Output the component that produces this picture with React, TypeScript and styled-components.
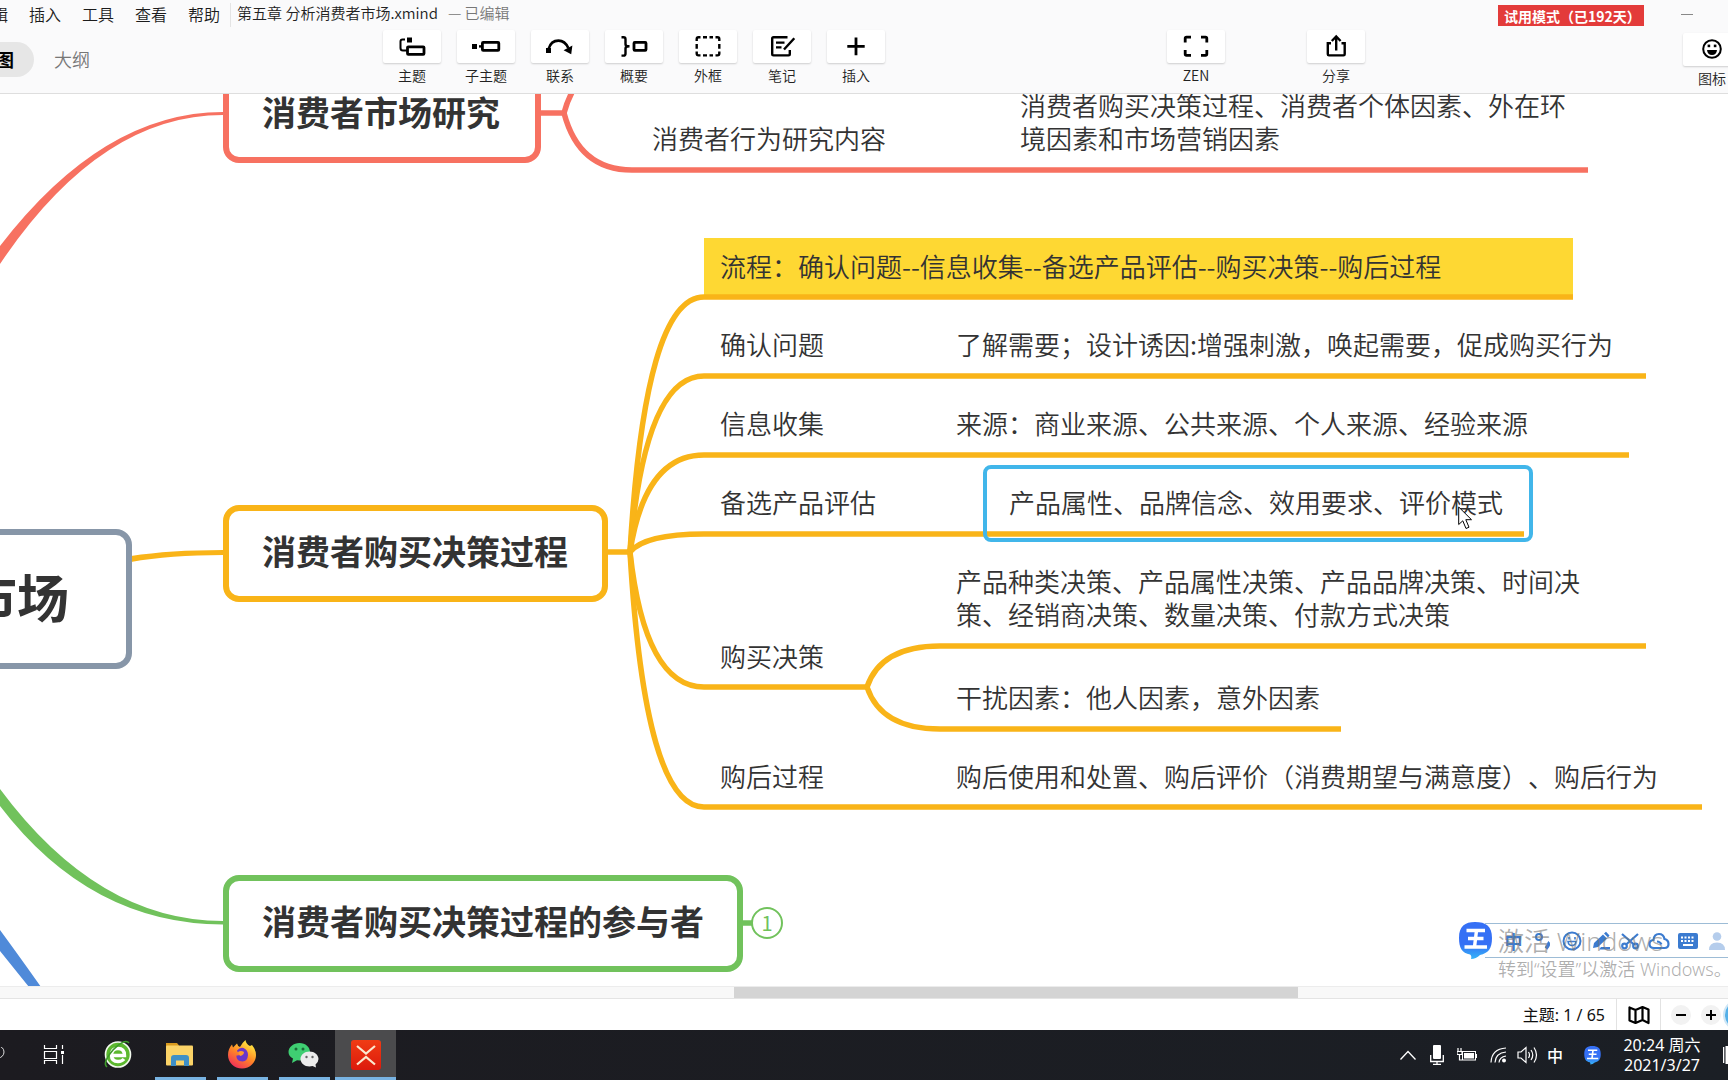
import React from "react";
import styled, { createGlobalStyle, css } from "styled-components";

const cjk = `"Noto Sans CJK SC", "Noto Sans", sans-serif`;
const latin = `"Noto Sans", "Noto Sans CJK SC", sans-serif`;

const color = {
  red: "#f77161",
  yellow: "#f9b418",
  green: "#71c25c",
  blue: "#4f8ad9",
  slate: "#8796a8",
  select: "#41b6ea",
  ime: "#3b7bd0",
  text: "#333333",
};

const GlobalStyle = createGlobalStyle`
  * { box-sizing: border-box; }
  body { margin: 0; background: #fff; font-family: ${cjk}; color: ${color.text}; overflow: hidden; }
  button { font: inherit; color: inherit; border: 0; padding: 0; background: none; cursor: pointer; }
  svg { display: block; flex: none; }
`;

const Page = styled.div`
  display: flex;
  flex-direction: column;
  height: 100vh;
  overflow: hidden;
`;

/* ---------- header ---------- */

const Header = styled.header`
  flex: none;
  background: #fafafb;
  border-bottom: 1px solid #dedede;
`;

const MenuRow = styled.div`
  display: flex;
  align-items: center;
  height: 30px;
  padding-right: 35px;
`;

const Menu = styled.nav`
  display: flex;
  gap: 21px;
  margin-left: -24px;
  padding: 0 10px 2px 0;
  border-right: 1px solid #e4e4e4;
`;

const MenuItem = styled.button`
  font-size: 16px;
  line-height: 22px;
  font-weight: 350;
  color: #1c1c1c;
  white-space: nowrap;
`;

const FileTitle = styled.div`
  display: flex;
  gap: 10px;
  margin-left: 6px;
  padding-bottom: 4px;
  font-size: 15px;
  line-height: 22px;
  font-weight: 350;
  color: #222;
  white-space: nowrap;
`;

const Edited = styled.span`
  color: #777;
`;

const TrialBadge = styled.button`
  && {
    margin-left: auto;
    width: 146px;
    height: 21px;
    padding-left: 6px;
    background: #e33b3a;
    color: #fff;
    font-size: 14px;
    line-height: 22px;
    font-weight: 700;
    text-align: left;
    white-space: nowrap;
  }
`;

const Minimize = styled.button`
  && {
    width: 12px;
    height: 12px;
    margin-left: 37px;
    display: flex;
    align-items: center;
  }
`;

const ToolRow = styled.div`
  display: flex;
  align-items: flex-start;
  height: 63px;
`;

const Tabs = styled.div`
  flex: 0 0 383px;
  display: flex;
  padding-top: 12px;
`;

const Tab = styled.button<{ $active?: boolean }>`
  && {
    height: 35px;
    padding: 0 20px;
    border-radius: 18px;
    font-size: 18px;
    line-height: 35px;
    font-weight: 350;
    color: #777;
    white-space: nowrap;
    ${(p) =>
      p.$active &&
      css`
        margin-left: -78px;
        background: #e6e6e6;
        color: #000;
        font-weight: 700;
      `}
  }
`;

const Tools = styled.div`
  display: flex;
  gap: 16px;
`;

const SideTools = styled.div`
  display: flex;
  gap: 82px;
  margin-left: auto;
`;

const PanelTools = styled.div`
  margin: 3px -13px 0 318px;
`;

const ToolButton = styled.button`
  display: flex;
  flex-direction: column;
  align-items: center;
  width: 58px;
  gap: 3px;
`;

const ToolFace = styled.span`
  width: 58px;
  height: 33px;
  background: #fff;
  border-radius: 2px;
  box-shadow: 0 1px 2px rgba(0, 0, 0, 0.18);
`;

const ToolLabel = styled.span`
  font-size: 14px;
  line-height: 18px;
  font-weight: 350;
  color: #222;
  white-space: nowrap;
`;

/* ---------- mind map canvas ---------- */

const Canvas = styled.main`
  flex: 1 1 0;
  min-height: 0;
  position: relative;
  overflow: hidden;
  background: #fff;
`;

/* The board is scrolled up under the header by the header's own height. */
const Board = styled.div`
  position: absolute;
  left: 0;
  top: -94px;
`;

const Wires = styled.svg`
  position: absolute;
  left: 0;
  top: 0;
  overflow: visible;
  fill: none;
  stroke-width: 5.5px;
`;

const MainTopic = styled.div<{ $x: number; $y: number; $w: number; $color: string }>`
  position: absolute;
  left: ${(p) => p.$x}px;
  top: ${(p) => p.$y}px;
  width: ${(p) => p.$w}px;
  height: 97px;
  padding-left: 33px;
  border: 6px solid ${(p) => p.$color};
  border-radius: 16px;
  background: #fff;
  font-size: 34px;
  line-height: 80px;
  font-weight: 700;
  white-space: nowrap;
`;

const RootTopic = styled.div`
  position: absolute;
  right: -132px;
  top: 529px;
  height: 140px;
  padding: 0 57px;
  border: 6px solid ${color.slate};
  border-radius: 16px;
  background: #fff;
  font-size: 52px;
  line-height: 122px;
  font-weight: 700;
  white-space: nowrap;
`;

const SubTopic = styled.div<{ $x: number; $y: number }>`
  position: absolute;
  left: ${(p) => p.$x}px;
  top: ${(p) => p.$y}px;
  font-size: 26px;
  line-height: 33px;
  font-weight: 350;
  text-spacing-trim: space-all;
  white-space: nowrap;
`;

const Highlight = styled.div`
  position: absolute;
  left: 704px;
  top: 238px;
  width: 869px;
  height: 59px;
  background: #fed833;
`;

const Selection = styled.div`
  position: absolute;
  left: 983px;
  top: 465px;
  width: 550px;
  height: 77px;
  border: 4px solid ${color.select};
  border-radius: 8px;
`;

const FoldButton = styled.button`
  && {
    position: absolute;
    left: 751px;
    top: 907px;
    width: 32px;
    height: 32px;
    border: 2px solid ${color.green};
    border-radius: 50%;
    background: #fff;
    color: ${color.green};
    font-size: 20px;
    line-height: 26px;
  }
`;

const Pointer = styled.svg`
  position: absolute;
  left: 1458px;
  top: 506px;
`;

/* ---------- input method bar and watermark ---------- */

const ImeBar = styled.div`
  position: absolute;
  right: 0;
  bottom: 28px;
  width: 253px;
  height: 35px;
  padding-left: 14px;
  display: flex;
  align-items: center;
  border-top: 1px solid #9dbcd6;
  border-bottom: 1px solid #9dbcd6;
  margin-right: -10px;
  color: ${color.ime};
`;

const ImeLogo = styled.svg`
  position: absolute;
  left: -26px;
  top: -2px;
`;

const ImeButton = styled.button`
  && {
    width: 29px;
    flex: none;
    display: flex;
    justify-content: center;
    font-size: 18px;
    line-height: 24px;
    font-weight: 700;
  }
`;

const Watermark = styled.div`
  position: absolute;
  left: calc(100% - 230px);
  bottom: 5px;
  color: rgba(120, 120, 120, 0.6);
  font-family: ${latin};
  font-weight: 350;
  white-space: nowrap;
  pointer-events: none;
`;

const WatermarkTitle = styled.div`
  font-size: 26px;
  line-height: 32px;
`;

const WatermarkHint = styled.div`
  font-size: 18px;
  line-height: 24px;
`;

/* ---------- scroll bar and status bar ---------- */

const ScrollTrack = styled.div`
  flex: none;
  height: 13px;
  background: #f8f8f8;
  border-top: 1px solid #ececec;
  border-bottom: 1px solid #e4e4e4;
`;

const ScrollThumb = styled.div`
  width: 32.6%;
  height: 100%;
  margin-left: 42.5%;
  background: #d4d4d4;
`;

const StatusBar = styled.footer`
  flex: none;
  height: 31px;
  display: flex;
  justify-content: flex-end;
  align-items: center;
  background: #fff;
`;

const TopicCount = styled.div`
  padding-right: 11px;
  font-family: ${latin};
  font-size: 16px;
  line-height: 30px;
  color: #111;
  white-space: nowrap;
`;

const OutlineButton = styled.button`
  && {
    width: 45px;
    height: 31px;
    display: flex;
    align-items: center;
    justify-content: center;
    border-left: 1px solid #e2e2e2;
    border-right: 1px solid #e2e2e2;
  }
`;

const ZoomButton = styled.button`
  && {
    width: 20px;
    height: 20px;
    margin-left: 10px;
    border-radius: 50%;
    background: #f2f2f2;
  }
`;

const AssistBall = styled.button`
  && {
    flex: none;
    width: 32px;
    height: 32px;
    margin: 0 -27px 0 2px;
    border: 2px solid #cfe6f5;
    border-radius: 50%;
    background: #55b0e8;
  }
`;

/* ---------- taskbar ---------- */

const Taskbar = styled.div`
  flex: none;
  height: 50px;
  display: flex;
  background: linear-gradient(90deg, #1c1b20, #1b1f25);
  color: #fff;
`;

const TaskSearch = styled.button`
  && {
    width: 25px;
    display: flex;
    align-items: center;
  }
`;

const TaskButton = styled.button<{ $running?: boolean; $active?: boolean }>`
  && {
    width: ${(p) => (p.$active ? 61 : 62)}px;
    display: flex;
    flex-direction: column;
    align-items: center;
    background: ${(p) => (p.$active ? "#4b4b4d" : "transparent")};
    &::after {
      content: "";
      width: ${(p) => (p.$active ? "61px" : "51px")};
      height: 3px;
      background: ${(p) => (p.$running ? "#78b3e2" : "transparent")};
    }
  }
`;

const Tray = styled.div`
  margin-left: auto;
  display: flex;
  align-items: center;
`;

const TrayButton = styled.button<{ $w: number }>`
  && {
    width: ${(p) => p.$w}px;
    height: 50px;
    display: flex;
    align-items: center;
    justify-content: center;
    font-size: 16px;
    line-height: 24px;
    font-weight: 500;
  }
`;

const Clock = styled.button`
  && {
    width: 88px;
    margin-left: 3px;
    font-family: ${latin};
    font-size: 16px;
    line-height: 20px;
    text-align: center;
    white-space: nowrap;
  }
`;

/* ---------- icons ---------- */

const Face = ({ children }: { children: React.ReactNode }) => (
  <svg width="58" height="33" viewBox="0 0 58 33" fill="none" stroke="#000" strokeWidth="2.4">
    {children}
  </svg>
);

const filled = { fill: "#000", stroke: "none" };

const tools = [
  {
    label: "主题",
    icon: (
      <>
        <path d="M22 9.5H19.5Q17.5 9.5 17.5 11.5V18Q17.5 20.5 20 20.5H24" strokeWidth="2" />
        <rect x="24" y="7.5" width="5" height="5" {...filled} />
        <rect x="24.5" y="16.8" width="16.5" height="7.6" rx="0.8" strokeWidth="2.8" />
      </>
    ),
  },
  {
    label: "子主题",
    icon: (
      <>
        <rect x="15" y="14" width="5" height="5" {...filled} />
        <path d="M22 16.4H25" />
        <rect x="25.4" y="12.4" width="16.4" height="8" rx="0.8" strokeWidth="2.8" />
      </>
    ),
  },
  {
    label: "联系",
    icon: (
      <>
        <path d="M17.5 19Q20 10.6 27.5 10.6Q34 10.6 37.3 18" strokeWidth="2.6" />
        <rect x="15" y="18" width="5" height="5" {...filled} />
        <path d="M41.4 15.5L40.2 24.2L32.6 20.2Z" {...filled} />
      </>
    ),
  },
  {
    label: "概要",
    icon: (
      <>
        <path d="M16.5 7.2H18.5Q20.5 7.2 20.5 9.2V14.2Q20.5 16.3 24.5 16.3Q20.5 16.3 20.5 18.4V23.4Q20.5 25.6 18.5 25.6H16.5" />
        <rect x="29" y="12.4" width="12" height="8" rx="0.8" strokeWidth="2.8" />
      </>
    ),
  },
  {
    label: "外框",
    icon: (
      <path d="M17.7 11V9Q17.7 7.2 19.5 7.2H21.5M24 7.2H28M30.5 7.2H34M36.5 7.2H38.5Q40.3 7.2 40.3 9V11M40.3 14V18.8M40.3 21.6V23.6Q40.3 25.4 38.5 25.4H36.5M34 25.4H30.5M28 25.4H24M21.5 25.4H19.5Q17.7 25.4 17.7 23.6V21.6M17.7 18.8V14" />
    ),
  },
  {
    label: "笔记",
    icon: (
      <path d="M34.5 7.2H20.5Q19.2 7.2 19.2 8.5V24.1Q19.2 25.4 20.5 25.4H35.5Q36.8 25.4 36.8 24.1V20M23 12.6H31.5M23 17.4H28.5M41.3 8.2L31 19.5" />
    ),
  },
  { label: "插入", icon: <path d="M29 7.5V25.3M20.3 16.4H37.7" strokeWidth="2.8" /> },
];

const zenIcon = (
  <path
    d="M18.2 12.5V8.5Q18.2 7.2 19.5 7.2H24M34 7.2H38.5Q39.8 7.2 39.8 8.5V12.5M39.8 20V24.1Q39.8 25.4 38.5 25.4H34M24 25.4H19.5Q18.2 25.4 18.2 24.1V20"
    strokeWidth="2.8"
  />
);

const shareIcon = (
  <path d="M24 13.2H20.8V24.2Q20.8 25.4 22 25.4H36.5Q37.7 25.4 37.7 24.2V13.2H34.5M29.2 20.5V7M24.8 11L29.2 6.5L33.6 11" />
);

const stickerIcon = (
  <>
    <circle cx="29" cy="16" r="8.8" strokeWidth="2" />
    <rect x="24.6" y="11.6" width="2.6" height="2.6" {...filled} />
    <rect x="30.8" y="11.6" width="2.6" height="2.6" {...filled} />
    <path d="M24 17H34Q33.5 22 29 22Q24.500 22 24 17Z" {...filled} />
  </>
);

const Tool = ({ label, icon }: { label: string; icon: React.ReactNode }) => (
  <ToolButton type="button">
    <ToolFace>
      <Face>{icon}</Face>
    </ToolFace>
    <ToolLabel>{label}</ToolLabel>
  </ToolButton>
);

const KingGlyph = ({ id }: { id: string }) => (
  <>
    <defs>
      <linearGradient id={id} x1="0" y1="0" x2="0" y2="1">
        <stop offset="0.6" stopColor="#3570f5" />
        <stop offset="1" stopColor="#36b4f8" />
      </linearGradient>
    </defs>
    <path
      d="M16 0C27 0 33 4 33 16C33 27 29 31 21 33Q17 37 12 37Q13 34 11 32.500C3 31 0 26 0 16C0 4 6 0 16 0Z"
      fill={`url(#${id})`}
    />
    <path d="M7.500 8.500H26M9 16.500H24.500M5.500 25H28M17.500 8.500L15.500 25" stroke="#fff" strokeWidth="3.4" fill="none" />
  </>
);

/* ---------- map data ---------- */

const yellowRows = [
  { y: 297, end: 1573 },
  { y: 376, end: 1646 },
  { y: 455, end: 1629 },
  { y: 534, end: 1524 },
  { y: 687, end: 867 },
  { y: 807, end: 1702 },
];

const subTopics: { x: number; y: number; text: React.ReactNode }[] = [
  { x: 652, y: 121, text: "消费者行为研究内容" },
  { x: 1020, y: 88, text: <>消费者购买决策过程、消费者个体因素、外在环<br />境因素和市场营销因素</> },
  { x: 720, y: 249, text: "流程：确认问题--信息收集--备选产品评估--购买决策--购后过程" },
  { x: 720, y: 327, text: "确认问题" },
  { x: 956, y: 327, text: "了解需要；设计诱因:增强刺激，唤起需要，促成购买行为" },
  { x: 720, y: 406, text: "信息收集" },
  { x: 956, y: 406, text: "来源：商业来源、公共来源、个人来源、经验来源" },
  { x: 720, y: 485, text: "备选产品评估" },
  { x: 1009, y: 485, text: "产品属性、品牌信念、效用要求、评价模式" },
  { x: 956, y: 564, text: <>产品种类决策、产品属性决策、产品品牌决策、时间决<br />策、经销商决策、数量决策、付款方式决策</> },
  { x: 720, y: 639, text: "购买决策" },
  { x: 956, y: 680, text: "干扰因素：他人因素，意外因素" },
  { x: 720, y: 759, text: "购后过程" },
  { x: 956, y: 759, text: "购后使用和处置、购后评价（消费期望与满意度）、购后行为" },
];

const MindMap = () => (
  <Board>
    <Highlight />
    <Wires width="1728" height="986">
      <path d="M0 246Q103 112 223 112V115Q100 115 0 264Z" fill={color.red} />
      <path d="M0 789Q98 921 223 921V924.500Q90 924 0 806Z" fill={color.green} />
      <path d="M131 556Q170 550 223 550V555Q170 555 131 562Z" fill={color.yellow} />
      <path d="M0 930Q16 964 29 987H41Q22 960 0 930Z M0 930V951L29 987H41Z" fill={color.blue} />
      <g stroke={color.red}>
        <path d="M538 113H564Q579 57 637 57" />
        <path d="M564 113Q579 170 632 170H1588" />
      </g>
      <g stroke={color.yellow} strokeLinejoin="round">
        <path d="M606 552H630" />
        {yellowRows.map((r) => (
          <path key={r.y} d={`M630 552Q645 ${r.y} 704 ${r.y}H${r.end}`} />
        ))}
        <path d="M867 687Q881 646 940 646H1646" />
        <path d="M867 687Q881 729 940 729H1341" />
      </g>
      <path d="M741 923H753" stroke={color.green} />
    </Wires>
    <RootTopic>分析消费者市场</RootTopic>
    <MainTopic $x={223} $y={66} $w={318} $color={color.red}>消费者市场研究</MainTopic>
    <MainTopic $x={223} $y={505} $w={385} $color={color.yellow}>消费者购买决策过程</MainTopic>
    <MainTopic $x={223} $y={875} $w={520} $color={color.green}>消费者购买决策过程的参与者</MainTopic>
    {subTopics.map((t) => (
      <SubTopic key={`${t.x}-${t.y}`} $x={t.x} $y={t.y}>{t.text}</SubTopic>
    ))}
    <Selection />
    <FoldButton type="button">1</FoldButton>
    <Pointer width="15" height="24" viewBox="0 0 15 24">
      <path d="M0.700 1V18.500L4.800 14.800L8 22.500L11 21.200L7.800 13.700H13.500Z" fill="#fff" stroke="#000" />
    </Pointer>
  </Board>
);

const Ime = () => (
  <ImeBar>
    <ImeLogo width="33" height="38" viewBox="0 0 33 38"><KingGlyph id="kingBar" /></ImeLogo>
    <ImeButton type="button">中</ImeButton>
    <ImeButton type="button" aria-label="标点">
      <svg width="18" height="18" viewBox="0 0 18 18" fill="none" stroke="currentColor" strokeWidth="2">
        <circle cx="5" cy="5" r="3" />
        <path d="M13.500 10.500Q16 12 12 16.500" strokeWidth="3.400" />
      </svg>
    </ImeButton>
    <ImeButton type="button" aria-label="表情">
      <svg width="20" height="20" viewBox="0 0 20 20" fill="none" stroke="currentColor" strokeWidth="2">
        <circle cx="10" cy="10" r="8.500" />
        <path d="M6 10.500Q6.500 14.500 10 14.500Q13.500 14.500 14 10.500ZM7 6V8.500M13 6V8.500" strokeWidth="1.600" />
      </svg>
    </ImeButton>
    <ImeButton type="button" aria-label="手写">
      <svg width="20" height="20" viewBox="0 0 20 20" fill="currentColor">
        <path d="M3 12L12 3.500L16 7.500L7 16L2 17ZM13 2.500L15 0.800L18.500 4.500L17 6.500ZM10 16H19V18.500H8Z" />
      </svg>
    </ImeButton>
    <ImeButton type="button" aria-label="截图">
      <svg width="18" height="18" viewBox="0 0 18 18" fill="none" stroke="currentColor" strokeWidth="2.200">
        <path d="M1 2L13.500 13M17 2L4.500 13" />
        <circle cx="3.500" cy="14" r="2.300" />
        <circle cx="14.500" cy="14" r="2.300" />
      </svg>
    </ImeButton>
    <ImeButton type="button" aria-label="云">
      <svg width="22" height="18" viewBox="0 0 22 18" fill="none" stroke="currentColor" strokeWidth="2.200">
        <path d="M6 16Q1.500 16 1.500 12Q1.500 8.500 5.500 8Q6 2 11 2Q15.500 2 16.500 7Q20.500 8 20.500 12Q20.500 16 16.500 16ZM9 9.500Q12 9.500 13.500 12.500" />
      </svg>
    </ImeButton>
    <ImeButton type="button" aria-label="键盘">
      <svg width="20" height="16" viewBox="0 0 20 16">
        <rect width="20" height="16" rx="2" fill="currentColor" />
        <path d="M3 4.500H17M3 8H17" stroke="#fff" strokeWidth="2" strokeDasharray="2 1.500" />
        <path d="M5 12H15" stroke="#fff" strokeWidth="2" />
      </svg>
    </ImeButton>
    <ImeButton type="button" aria-label="用户">
      <svg width="16" height="18" viewBox="0 0 16 18" fill="#b5cdec">
        <circle cx="8" cy="4.500" r="4.300" />
        <path d="M0 18Q0 10.500 8 10.500Q16 10.500 16 18Z" />
      </svg>
    </ImeButton>
  </ImeBar>
);

const TaskSvg = ({ children }: { children: React.ReactNode }) => (
  <svg width="34" height="47" viewBox="0 0 34 47" fill="none">
    {children}
  </svg>
);

const TaskBarView = () => (
  <Taskbar>
    <TaskSearch type="button" aria-label="搜索">
      <svg width="6" height="16" viewBox="0 0 6 16" fill="none" stroke="#ddd">
        <circle cx="-2" cy="5" r="6" />
      </svg>
    </TaskSearch>
    <TaskButton type="button" aria-label="任务视图">
      <TaskSvg>
        <path d="M5.500 15V18.500H17.500V15M5.500 34V30.500H17.500V34M5.500 21.500H17.500V28.500H5.500ZM23.500 15V19M23.500 25V34" stroke="#fff" strokeWidth="1.200" />
        <rect x="22" y="21" width="3" height="3" fill="#fff" />
      </TaskSvg>
    </TaskButton>
    <TaskButton type="button" aria-label="浏览器">
      <TaskSvg>
        <circle cx="17" cy="24.500" r="12.500" fill="#5cb82f" stroke="#f3faf0" strokeWidth="1.600" />
        <path d="M10.500 25.500H23.500Q23.500 18.500 17 18.500Q10.500 18.500 10.500 25Q10.500 31.500 17 31.500Q21 31.500 23 29" stroke="#fff" strokeWidth="3.400" />
        <path d="M6 37Q1 33 12 20Q24 8 28 13" stroke="#3d9a2a" strokeWidth="1.600" />
      </TaskSvg>
    </TaskButton>
    <TaskButton type="button" $running aria-label="文件资源管理器">
      <TaskSvg>
        <path d="M3 13H14L16 15.500V20H3Z" fill="#d99a1e" />
        <rect x="3" y="15.500" width="27" height="20" rx="1" fill="#fbd367" />
        <path d="M8 36V28Q8 25 11 25H23Q26 25 26 28V36H21V30.500H13V36Z" fill="#3f8fc6" />
      </TaskSvg>
    </TaskButton>
    <TaskButton type="button" $running aria-label="火狐">
      <TaskSvg>
        <defs>
          <linearGradient id="fox" x1="0.800" y1="0" x2="0.200" y2="1">
            <stop offset="0.100" stopColor="#ffe23f" />
            <stop offset="0.500" stopColor="#ff8a25" />
            <stop offset="1" stopColor="#f0265f" />
          </linearGradient>
        </defs>
        <path d="M17 38.500C9 38.500 3 32.500 3 25C3 21 4.500 17 7 14.500L8 17.500L12 13.500Q12.500 16 15 17Q17 13 20.500 10Q21 14 25 16L27 15Q31 20 31 25C31 32.500 25 38.500 17 38.500Z" fill="url(#fox)" />
        <path d="M17.500 31.500C13.500 31.500 11 28.500 11.500 25.500Q15 26 17 23Q12 23 12 20.500Q15 17 18.500 18Q23 20 23 25Q22.500 31.500 17.500 31.500Z" fill="#6a36c9" />
        <path d="M13 22Q16 20 19 22Q19 25 15 26Z" fill="#ff9a2a" />
      </TaskSvg>
    </TaskButton>
    <TaskButton type="button" $running aria-label="微信">
      <TaskSvg>
        <path d="M12.500 13C18.500 13 23 17 23 22C23 27 18.500 30.500 12.500 30.500L10 30.300L5 33L6 28.500Q1.500 26 1.500 22C1.500 17 6.500 13 12.500 13Z" fill="#3fcf72" />
        <circle cx="9" cy="19" r="1.500" fill="#1c6b39" />
        <circle cx="16" cy="19" r="1.500" fill="#1c6b39" />
        <path d="M22.500 21.500C27.500 21.500 31.500 25 31.500 29Q31.500 32 28.500 34.500L29 37.500L25.500 36L22.500 36.500C17.500 36.500 13.500 33 13.500 29C13.500 25 17.500 21.500 22.500 21.500Z" fill="#ececec" />
        <circle cx="19.500" cy="27" r="1.200" fill="#666" />
        <circle cx="25.500" cy="27" r="1.200" fill="#666" />
      </TaskSvg>
    </TaskButton>
    <TaskButton type="button" $running $active aria-label="XMind">
      <TaskSvg>
        <defs>
          <linearGradient id="xm" x1="0" y1="0" x2="0" y2="1">
            <stop offset="0" stopColor="#f03c14" />
            <stop offset="1" stopColor="#dc1a0c" />
          </linearGradient>
        </defs>
        <rect x="2" y="10" width="30" height="30" rx="3" fill="url(#xm)" />
        <path d="M8 16L17 23.500L26 16M8 34.500L17 27L26 34.500" stroke="#fbe9d0" strokeWidth="2.200" />
      </TaskSvg>
    </TaskButton>
    <Tray>
      <TrayButton type="button" $w={29} aria-label="显示隐藏的图标">
        <svg width="16" height="10" viewBox="0 0 16 10" fill="none" stroke="#fff" strokeWidth="1.300"><path d="M0.500 9.500L8 1.500L15.500 9.500" /></svg>
      </TrayButton>
      <TrayButton type="button" $w={29} aria-label="麦克风">
        <svg width="14" height="20" viewBox="0 0 14 20" fill="none" stroke="#fff">
          <rect x="3" y="0" width="8" height="14" fill="#fff" stroke="none" rx="1" />
          <path d="M0.700 10V16.500H13.300V10M7 16.500V19.500M3 19.300H11" strokeWidth="1.300" />
        </svg>
      </TrayButton>
      <TrayButton type="button" $w={32} aria-label="电池">
        <svg width="20" height="14" viewBox="0 0 20 14" fill="none" stroke="#fff">
          <rect x="5.500" y="3.500" width="13" height="8.500" />
          <rect x="7" y="5" width="10" height="5.500" fill="#fff" stroke="none" />
          <path d="M19.500 6V10M1 0V3M4 0V3M0 3.500H5V6.500H0ZM2.500 7V12H5" strokeWidth="1.200" />
        </svg>
      </TrayButton>
      <TrayButton type="button" $w={30} aria-label="网络">
        <svg width="17" height="16" viewBox="0 0 17 16" fill="none" stroke="#fff" strokeWidth="1.200">
          <path d="M1 15.500Q1.500 2 16 1M5 15.500Q5.500 6 16 5M9 15.500Q9.500 10 16 9" />
          <circle cx="14" cy="13.500" r="2" fill="#fff" stroke="none" />
        </svg>
      </TrayButton>
      <TrayButton type="button" $w={28} aria-label="音量">
        <svg width="21" height="18" viewBox="0 0 21 18" fill="none" stroke="#fff" strokeWidth="1.200">
          <path d="M1 6H4L9 1.500V16.500L4 12H1ZM11.500 6Q13.500 9 11.500 12M14 4Q17.500 9 14 14M17 1.500Q22 9 17 16.500" />
        </svg>
      </TrayButton>
      <TrayButton type="button" $w={28}>中</TrayButton>
      <TrayButton type="button" $w={46} aria-label="输入法">
        <svg width="17" height="19" viewBox="0 0 33 38"><KingGlyph id="kingTray" /></svg>
      </TrayButton>
      <Clock type="button">20:24 周六<br />2021/3/27</Clock>
      <TrayButton type="button" $w={22} aria-label="通知">
        <svg width="22" height="18" viewBox="0 0 22 18" fill="#fff"><path d="M17 1H18.300V17H17ZM19.500 0H22V18H19.500Z" /></svg>
      </TrayButton>
    </Tray>
  </Taskbar>
);

export default function App() {
  return (
    <Page>
      <GlobalStyle />
      <Header>
        <MenuRow>
          <Menu>
            {["编辑", "插入", "工具", "查看", "帮助"].map((m) => (
              <MenuItem key={m} type="button">{m}</MenuItem>
            ))}
          </Menu>
          <FileTitle>
            <span>第五章 分析消费者市场.xmind</span>
            <Edited>— 已编辑</Edited>
          </FileTitle>
          <TrialBadge type="button">试用模式（已192天）</TrialBadge>
          <Minimize type="button" aria-label="最小化">
            <svg width="12" height="2" viewBox="0 0 12 2"><rect width="12" height="1" fill="#888" /></svg>
          </Minimize>
        </MenuRow>
        <ToolRow>
          <Tabs>
            <Tab type="button" $active>思维导图</Tab>
            <Tab type="button">大纲</Tab>
          </Tabs>
          <Tools>
            {tools.map((t) => (
              <Tool key={t.label} {...t} />
            ))}
          </Tools>
          <SideTools>
            <Tool label="ZEN" icon={zenIcon} />
            <Tool label="分享" icon={shareIcon} />
          </SideTools>
          <PanelTools>
            <Tool label="图标" icon={stickerIcon} />
          </PanelTools>
        </ToolRow>
      </Header>

      <Canvas>
        <MindMap />
        <Ime />
        <Watermark>
          <WatermarkTitle>激活 Windows</WatermarkTitle>
          <WatermarkHint>转到“设置”以激活 Windows。</WatermarkHint>
        </Watermark>
      </Canvas>

      <ScrollTrack>
        <ScrollThumb />
      </ScrollTrack>
      <StatusBar>
        <TopicCount>主题: 1 / 65</TopicCount>
        <OutlineButton type="button" aria-label="导航">
          <svg width="22" height="20" viewBox="0 0 22 20" fill="none" stroke="#000" strokeWidth="2.200" strokeLinejoin="round">
            <path d="M1.500 2.500V15.500L7.500 18L14.500 15L20.500 18V4.500L14.500 2L7.500 5ZM7.500 5V18M14.500 2V15" />
          </svg>
        </OutlineButton>
        <ZoomButton type="button" aria-label="缩小">
          <svg width="20" height="20" viewBox="0 0 20 20" stroke="#000" strokeWidth="2"><path d="M5 10H15" /></svg>
        </ZoomButton>
        <ZoomButton type="button" aria-label="放大">
          <svg width="20" height="20" viewBox="0 0 20 20" stroke="#000" strokeWidth="2"><path d="M5 10H15M10 5V15" /></svg>
        </ZoomButton>
        <AssistBall type="button" aria-label="加速球" />
      </StatusBar>
      <TaskBarView />
    </Page>
  );
}
